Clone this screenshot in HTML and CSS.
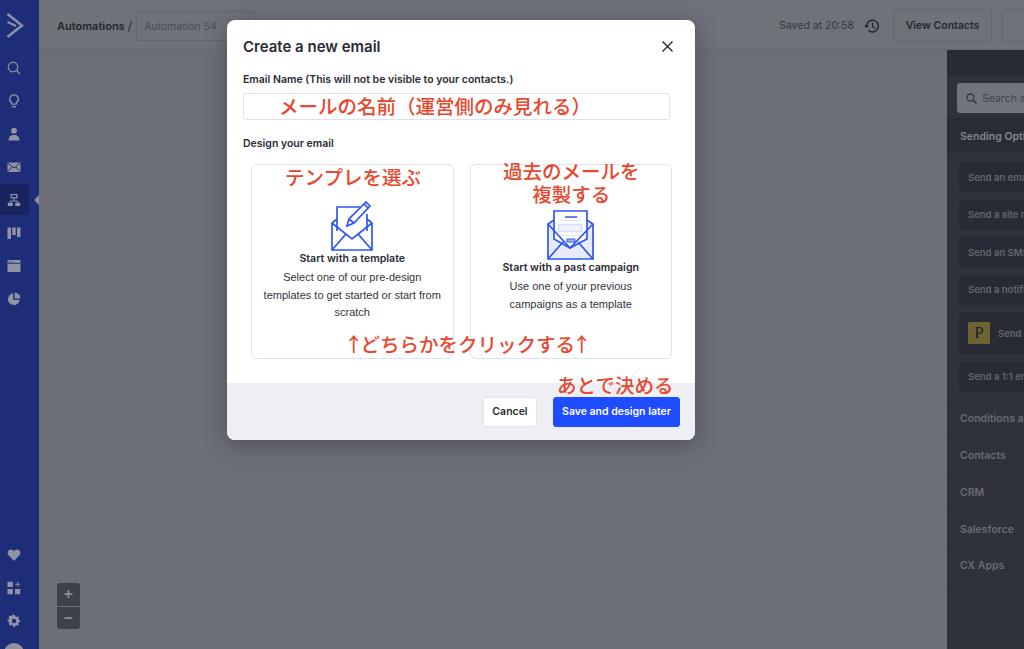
FILE: index.html
```html
<!DOCTYPE html>
<html lang="en">
<head>
  <meta charset="UTF-8" />
  <title>Automation 54</title>
  <link rel="stylesheet" href="styles.css">
</head>
<body>

  <aside class="sidebar">
    <div class="logo">
      <svg width="18" height="25" viewBox="0 0 18 25"><path d="M1.500 1l14.500 11.500L1.500 24" fill="none" stroke="#8b90a6" stroke-width="2.600"/><path d="M1.500 9l8.500 4" fill="none" stroke="#8b90a6" stroke-width="2"/></svg>
    </div>
    <ul class="side-nav">
      <li><svg viewBox="0 0 14 14"><circle cx="6" cy="6" r="4.800" fill="none" stroke="currentColor" stroke-width="1.200"/><path d="M9.600 9.600L13 13" stroke="currentColor" stroke-width="1.400"/></svg></li>
      <li><svg viewBox="0 0 14 14"><path d="M7 .8a4.300 4.300 0 0 0-2.400 7.900v1.500h4.800V8.700A4.300 4.300 0 0 0 7 .8z" fill="none" stroke="currentColor" stroke-width="1.300"/><path d="M5 12h4v1.400H5z" fill="currentColor"/></svg></li>
      <li><svg viewBox="0 0 14 14"><circle cx="7" cy="3.700" r="2.900" fill="currentColor"/><path d="M1.500 13.400c0-3.600 2.400-5.400 5.500-5.400s5.500 1.800 5.500 5.400z" fill="currentColor"/></svg></li>
      <li><svg viewBox="0 0 14 14"><path d="M.5 2.500h13v9.500H.5z" fill="currentColor"/><path d="M.8 3l6.200 5 6.200-5M.8 11.600l4.400-4.600M13.200 11.600L8.800 7" fill="none" stroke="#1e2d78" stroke-width="1"/></svg></li>
      <li class="active"><svg viewBox="0 0 14 14"><path d="M3.500 1h7v4.500h-7zM.8 9.800h5v3.200h-5zM8.200 9.800h5V13h-5z" fill="currentColor"/><path d="M7 5v3H3.300v2M7 8h3.700v2" fill="none" stroke="currentColor" stroke-width="1"/><path d="M4.800 2.200h4.400v2H4.800z" fill="#182460"/></svg></li>
      <li><svg viewBox="0 0 14 14"><path d="M.5 1.500h3.500V13H.5zM5.300 1.500h3.400v7.500H5.300zM10 1.500h3.500V11H10z" fill="currentColor"/></svg></li>
      <li><svg viewBox="0 0 14 14"><path d="M.5 1h13v12H.5z" fill="currentColor"/><path d="M.5 4.300h13" stroke="#1e2d78" stroke-width=".9"/><path d="M2 2.700h4" stroke="#1e2d78" stroke-width=".7" stroke-dasharray="1 .7"/></svg></li>
      <li><svg viewBox="0 0 14 14"><path d="M6.200 1.300a5.900 5.900 0 1 0 6.500 6.500H6.200z" fill="currentColor"/><path d="M7.600.6v5.800h5.800A5.800 5.800 0 0 0 7.600.6z" fill="currentColor"/></svg></li>
    </ul>
    <ul class="side-nav side-bottom">
      <li><svg viewBox="0 0 14 14"><path d="M7 13L1.500 7.300C-.4 5 1 1.500 3.900 1.500 5.300 1.500 6.300 2.300 7 3.300 7.700 2.300 8.700 1.500 10.100 1.500 13 1.500 14.400 5 12.500 7.300z" fill="currentColor"/></svg></li>
      <li><svg viewBox="0 0 14 14"><path d="M.5.800h5.300v5.300H.5zM.5 8h5.300v5.300H.5zM8 8h5.300v5.300H8z" fill="currentColor"/><path d="M10.700.8v5M8.200 3.300h5" stroke="currentColor" stroke-width="1"/></svg></li>
      <li><svg viewBox="0 0 14 14"><path d="M7 .8l1.200.2.400 1.600 1.200.5 1.500-.8 1.500 1.500-.8 1.500.5 1.200 1.600.4v2l-1.600.4-.5 1.200.8 1.500-1.500 1.500-1.500-.8-1.200.5-.4 1.600h-2l-.4-1.600-1.200-.5-1.500.8L.6 11.500l.8-1.500-.5-1.200L-.7 8.400v-2l1.600-.4.500-1.200-.8-1.500L2.100 1.300l1.500.8 1.200-.5.400-1.600z" transform="translate(1.100 .3) scale(.85)" fill="currentColor"/><circle cx="7" cy="7" r="2.200" fill="#1e2d78"/></svg></li>
    </ul>
    <div class="avatar"></div>
  </aside>

  <div class="main">
    <header class="topbar">
      <div class="crumb">Automations</div>
      <div class="crumb-sep">/</div>
      <div class="name-field">Automation 54</div>
      <div class="saved">Saved at 20:58</div>
      <svg class="history" width="16" height="16" viewBox="0 0 16 16"><path d="M2.600 8a5.900 5.900 0 1 1 1.800 4.300" fill="none" stroke="#24262e" stroke-width="1.500"/><path d="M0 7.200h5.200L2.600 10.300z" fill="#24262e"/><path d="M8.500 4.500v4l2.500 1.700" fill="none" stroke="#24262e" stroke-width="1.300"/></svg>
      <button class="top-btn">View Contacts</button>
      <button class="top-btn top-btn-next"></button>
    </header>

    <div class="workspace">
      <div class="canvas">
        <div class="zoom-ctl">
          <div class="zoom-btn">+</div>
          <div class="zoom-btn">−</div>
        </div>
      </div>
      <section class="panel">
        <div class="panel-head"></div>
        <div class="panel-search">
          <div class="search-box">
            <svg width="11" height="11" viewBox="0 0 11 11"><circle cx="4.500" cy="4.500" r="3.500" fill="none" stroke="#33353f" stroke-width="1.300"/><path d="M7.200 7.200L10.500 10.500" stroke="#33353f" stroke-width="1.500"/></svg>
            Search actions
          </div>
        </div>
        <div class="group-title group-open">Sending Options</div>
        <div class="group-items">
          <div class="action">Send an email</div>
          <div class="action">Send a site message</div>
          <div class="action">Send an SMS</div>
          <div class="action">Send a notification email</div>
          <div class="action action-tall"><span class="p-logo">P</span>Send a postcard</div>
          <div class="action">Send a 1:1 email</div>
        </div>
        <div class="group-title">Conditions and Workflow</div>
        <div class="group-title">Contacts</div>
        <div class="group-title">CRM</div>
        <div class="group-title">Salesforce</div>
        <div class="group-title">CX Apps</div>
      </section>
    </div>
  </div>

  <div class="modal">
    <div class="modal-body">
      <div class="modal-head">
        <h2>Create a new email</h2>
        <svg width="11" height="11" viewBox="0 0 11 11"><path d="M.5.5l10 10M10.500.5l-10 10" stroke="#24262e" stroke-width="1.400"/></svg>
      </div>
      <label class="field-label">Email Name (This will not be visible to your contacts.)</label>
      <div class="text-input"></div>
      <div class="field-label design-label">Design your email</div>
      <div class="cards">
        <div class="card">
          <svg class="card-icon" width="42" height="50" viewBox="0 0 42 50" fill="none" stroke="#2f55f5" stroke-width="1.700">
            <path d="M6 30V6h23M36 13v17"/>
            <path d="M6 18l-5 4v27h40V22l-5-4M1 22l20 16 20-16M1 49l14-16M41 49L27 33"/>
            <path d="M16 25l2-7L35 1l4 4-16 17z"/>
            <path d="M33 3l4 4M18 18l5 4"/>
          </svg>
          <h4>Start with a template</h4>
          <p>Select one of our pre-design templates to get started or start from scratch</p>
        </div>
        <div class="card">
          <svg class="card-icon" width="47" height="50" viewBox="0 0 47 50" fill="none" stroke="#2f55f5" stroke-width="1.700">
            <path d="M7 10l-6 4v35h45V14l-6-4z" fill="#e6ecfd"/>
            <path d="M7 1h33v28L23 38 7 29z" fill="#fff"/>
            <path d="M1 14l22 24 23-24M1 49l15-17M46 49L31 32"/>
            <path d="M18 7h12" stroke-width="1.300"/>
            <path d="M13 10.500h21M13 25.500h21" stroke="#d6dffb" stroke-width="1.200"/>
            <path d="M11.500 14.500h23v7h-23z" fill="#f1f4fe" stroke="#d6dffb"/>
            <path d="M20 29h8v3h-8z" fill="#9fb2f8" stroke-width="1"/>
          </svg>
          <h4>Start with a past campaign</h4>
          <p>Use one of your previous<br>campaigns as a template</p>
        </div>
      </div>
    </div>
    <div class="modal-foot">
      <button class="btn">Cancel</button>
      <button class="btn btn-primary">Save and design later</button>
    </div>

    <div class="note note-name">メールの名前（運営側のみ見れる）</div>
    <div class="note note-template">テンプレを選ぶ</div>
    <div class="note note-past">過去のメールを<br>複製する</div>
    <div class="note note-click"><span class="arrow">↑</span>どちらかをクリックする<span class="arrow">↑</span></div>
    <div class="note note-later">あとで決める</div>
  </div>

</body>
</html>
```

FILE: styles.css
```css
* {
  box-sizing: border-box;
}

html, body {
  height: 100%;
}

body {
  font-family: 'Inter', 'Liberation Sans', sans-serif;
  background-color: #6c6f78;
  margin: 0;
  display: flex;
  overflow: hidden;
}

.sidebar {
  flex: 0 0 39px;
  background-color: #1e2d78;
  color: #8f93a3;
  display: flex;
  flex-direction: column;
  overflow: hidden;
  position: relative;
}

.logo {
  height: 50px;
  padding: 13px 0 0 6px;
}

.side-nav {
  list-style: none;
  margin: 0;
  padding: 1px 0 0;
  display: flex;
  flex-direction: column;
}

.side-nav li {
  height: 33px;
  width: 29px;
  padding-right: 1px;
  display: flex;
  align-items: center;
  justify-content: center;
}

.side-nav svg {
  width: 14px;
  height: 14px;
}

.side-nav .active {
  height: 31px;
  margin: 1px 0;
  background-color: #182460;
  border-radius: 0 4px 4px 0;
  position: relative;
}

.side-nav .active::after {
  content: "";
  position: absolute;
  left: 34px;
  top: 11px;
  border: 5px solid transparent;
  border-left: 0;
  border-right-color: #8a8d98;
}

.side-bottom {
  margin-top: auto;
  padding-bottom: 12px;
}

.avatar {
  position: absolute;
  left: 4px;
  top: 643px;
  width: 20px;
  height: 20px;
  border-radius: 50%;
  background-color: #8f93a3;
}

.main {
  flex: 1;
  min-width: 0;
  display: flex;
  flex-direction: column;
}

.topbar {
  height: 50px;
  background-color: #70727a;
  border-bottom: 1px solid #64666e;
  display: flex;
  align-items: center;
  padding: 2px 0 0 18px;
  overflow: hidden;
  color: #24262e;
}

.crumb {
  font-size: 11px;
  font-weight: 600;
}

.crumb-sep {
  font-size: 12px;
  margin: 0 4px 0 3px;
}

.name-field {
  width: 120px;
  height: 30px;
  border: 1px solid #64666e;
  border-radius: 3px;
  font-size: 10.500px;
  color: #4a4c54;
  padding: 8px 7px;
}

.saved {
  margin-left: auto;
  font-size: 10.500px;
  color: #34363e;
}

.history {
  margin: 0 13px 0 10px;
}

.top-btn {
  font-family: inherit;
  font-size: 10.500px;
  font-weight: 600;
  color: #24262e;
  width: 99px;
  height: 33px;
  background: transparent;
  border: 1px solid #64666e;
  border-radius: 3px;
  flex: none;
}

.top-btn-next {
  width: 60px;
  margin: 0 -38px 0 10px;
}

.workspace {
  flex: 1;
  display: flex;
  min-height: 0;
}

.canvas {
  flex: 1;
  position: relative;
}

.zoom-ctl {
  position: absolute;
  left: 18px;
  bottom: 20px;
  width: 23px;
  background-color: #3e414b;
  border-radius: 3px;
}

.zoom-btn {
  height: 23px;
  color: #8a8d98;
  font-size: 16px;
  font-weight: 600;
  line-height: 21px;
  text-align: center;
}

.zoom-btn + .zoom-btn {
  border-top: 1px solid #6c6f78;
}

.panel {
  flex: 0 0 77px;
  background-color: #2f313d;
  overflow: hidden;
  white-space: nowrap;
  font-size: 10px;
  font-weight: 600;
  color: #65676f;
}

.panel-head {
  height: 25px;
  background-color: #282a35;
}

.panel-search {
  height: 43px;
  padding: 8px 0 0 10px;
}

.search-box {
  width: 200px;
  height: 30px;
  background-color: #72747c;
  border-radius: 3px;
  color: #41434c;
  font-size: 10.500px;
  font-weight: 400;
  display: flex;
  align-items: center;
  gap: 5px;
  padding-left: 9px;
}

.group-title {
  height: 36.700px;
  line-height: 36px;
  padding-left: 13px;
  font-size: 10.500px;
  color: #696b74;
  border-bottom: 1px solid #2a2c37;
}

.group-open {
  height: 35px;
  line-height: 37px;
  background-color: #292b36;
  color: #85878f;
  border-bottom: 0;
}

.group-items {
  padding: 9px 0 8.500px 12px;
  border-bottom: 1px solid #2a2c37;
  display: flex;
  flex-direction: column;
  gap: 7.600px;
}

.action {
  width: 220px;
  height: 30px;
  background-color: #282a35;
  border-radius: 3px;
  padding-left: 9px;
  display: flex;
  align-items: center;
  font-size: 9.500px;
}

.action-tall {
  height: 42px;
}

.p-logo {
  width: 22px;
  height: 22px;
  background-color: #6e6332;
  color: #1f1f22;
  font-family: 'Liberation Serif', serif;
  font-size: 17px;
  font-weight: 400;
  text-align: center;
  line-height: 22px;
  margin-right: 8px;
}

.modal {
  position: absolute;
  left: 227px;
  top: 20px;
  width: 468px;
  height: 420px;
  background-color: #fff;
  border-radius: 8px;
  box-shadow: 0 4px 24px rgba(0, 0, 0, 0.3);
  display: flex;
  flex-direction: column;
  overflow: hidden;
  color: #2a2c34;
}

.modal-body {
  flex: 1;
  padding: 0 16px;
}

.modal-head {
  height: 53px;
  display: flex;
  align-items: center;
  justify-content: space-between;
  padding-right: 6px;
}

.modal-head h2 {
  margin: 0;
  font-size: 15px;
  font-weight: 600;
}

.field-label {
  display: block;
  font-size: 10.500px;
  font-weight: 600;
  line-height: 14px;
}

.text-input {
  width: 427px;
  height: 27px;
  margin-top: 6px;
  border: 1px solid #dfe2ec;
  border-radius: 3px;
}

.design-label {
  margin-top: 17px;
}

.cards {
  display: grid;
  grid-template-columns: 1fr 1fr;
  gap: 16px;
  width: 421px;
  margin: 13px 0 0 8px;
}

.card {
  height: 195px;
  border: 1px solid #dfe2ec;
  border-radius: 6px;
  display: flex;
  flex-direction: column;
  align-items: center;
  justify-content: center;
  text-align: center;
  padding: 0 10px;
}

.card-icon {
  display: block;
}

.card h4 {
  margin: 1px 0 0;
  font-size: 10.600px;
  font-weight: 600;
  line-height: 14px;
}

.card p {
  margin: 3px 0 0;
  font-family: 'Liberation Sans', sans-serif;
  font-size: 11px;
  line-height: 17.700px;
  color: #33353d;
}

.modal-foot {
  height: 57px;
  background-color: #eeeff4;
  display: flex;
  justify-content: flex-end;
  align-items: center;
  gap: 16px;
  padding-right: 15px;
}

.btn {
  font-family: inherit;
  font-size: 10.500px;
  font-weight: 600;
  height: 30px;
  width: 54px;
  background: #fff;
  color: #2a2c34;
  border: 1px solid #dfe2ec;
  border-radius: 3px;
}

.btn-primary {
  width: 127px;
  background: #1f4cff;
  border-color: #1f4cff;
  color: #fff;
}

.note {
  position: absolute;
  font-family: 'Noto Sans CJK JP', sans-serif;
  font-size: 19.500px;
  font-weight: 500;
  line-height: 23px;
  color: #e8472e;
  white-space: nowrap;
}

.arrow {
  margin: 0 -3px;
}

.note-name {
  left: 52px;
  top: 74px;
}

.note-template {
  left: 58px;
  top: 145px;
}

.note-past {
  left: 276px;
  top: 139px;
  text-align: center;
}

.note-click {
  left: 120px;
  top: 312px;
}

.note-later {
  left: 330px;
  top: 353px;
}
```
